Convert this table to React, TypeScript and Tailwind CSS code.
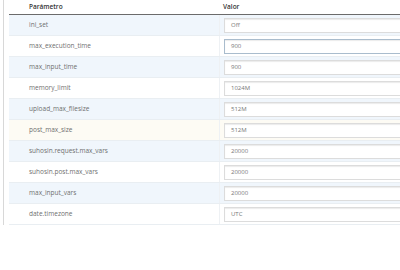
const settings: { name: string; value: string }[] = [
  { name: 'ini_set', value: 'Off' },
  { name: 'max_execution_time', value: '900' },
  { name: 'max_input_time', value: '900' },
  { name: 'memory_limit', value: '1024M' },
  { name: 'upload_max_filesize', value: '512M' },
  { name: 'post_max_size', value: '512M' },
  { name: 'suhosin.request.max_vars', value: '20000' },
  { name: 'suhosin.post.max_vars', value: '20000' },
  { name: 'max_input_vars', value: '20000' },
  { name: 'date.timezone', value: 'UTC' },
];

export default function App() {
  return (
    <div className="h-[270px] w-[400px] overflow-hidden bg-white font-['Open_Sans','Liberation_Sans',sans-serif]">
      <div className="ml-[3px] w-[430px] border-l border-[#d8d8d8] pl-[5px]">
        <div className="flex h-[15px] items-center border-b-[1.5px] border-[#6b6b6b] text-[6.5px] font-semibold text-[#333]">
          <div className="w-[210px] pl-[20px]">Parámetro</div>
          <div className="pl-[4px]">Valor</div>
        </div>
        {settings.map((s, i) => (
          <SettingRow key={s.name} index={i} name={s.name} value={s.value} />
        ))}
      </div>
    </div>
  );
}

function SettingRow({ index, name, value }: { index: number; name: string; value: string }) {
  // post_max_size sits under the pointer, hence the warm highlight
  const hovered = name === 'post_max_size';
  const bg = hovered ? 'bg-[#fdfbf4]' : index % 2 === 0 ? 'bg-[#f0f6fc]' : 'bg-white';
  const focused = name === 'max_execution_time';
  return (
    <div className={`flex h-[21px] items-center border-b border-[#e9eef2] ${bg}`}>
      <div className="w-[210px] pl-[20px] text-[6.5px] text-[#6f6f6f]">{name}</div>
      <div className="flex h-full flex-1 items-center border-l border-[#eef1f4] pl-[4px]">
        <div
          className={`flex h-[15px] w-full items-center border bg-white pl-[6px] text-[6px] text-[#777] shadow-[inset_0_1px_1px_rgba(0,0,0,0.08)] ${focused ? 'border-[#a9bccd]' : 'border-[#dcdcdc]'}`}
        >
          {value}
        </div>
      </div>
    </div>
  );
}
